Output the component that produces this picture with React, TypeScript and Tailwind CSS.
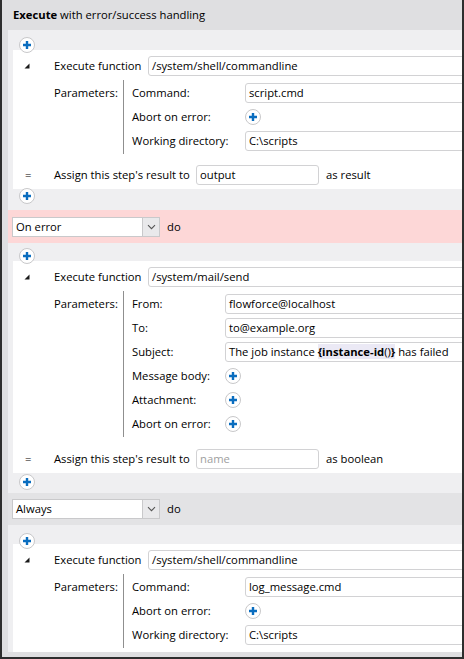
import React from "react";

function PlusButton() {
  return (
    <span className="flex h-[16px] w-[16px] items-center justify-center rounded-full border border-[#c8c8ca] bg-white">
      <svg width="10" height="10" viewBox="0 0 10 10">
        <path d="M5 1v8M1 5h8" stroke="#0a6dbf" strokeWidth="2.4" />
      </svg>
    </span>
  );
}

function Triangle() {
  return (
    <svg width="6" height="6" viewBox="0 0 6 6" className="block">
      <polygon points="5.5,0.5 5.5,5.5 0.5,5.5" fill="#1a1a1a" />
    </svg>
  );
}

function TextBox({ children, wide = true, className = "" }: { children?: React.ReactNode; wide?: boolean; className?: string }) {
  return (
    <div
      className={`flex h-[20px] items-center whitespace-nowrap rounded-[3px] border border-[#d2d2d4] bg-white pl-[3px] ${wide ? "flex-1 -mr-[12px]" : ""} ${className}`}
    >
      {children}
    </div>
  );
}

function Select({ value }: { value: string }) {
  return (
    <div className="flex items-center">
      <div className="flex h-[20px] w-[148px] items-center border border-[#c9c9cb] bg-white">
        <span className="flex-1 pl-[3px]">{value}</span>
        <span className="flex h-full w-[17px] items-center justify-center border-l border-[#c9c9cb] bg-[#e9e9eb]">
          <svg width="9" height="6" viewBox="0 0 9 6">
            <path d="M1 1.2l3.5 3.5L8 1.2" fill="none" stroke="#555" strokeWidth="1.1" />
          </svg>
        </span>
      </div>
      <span className="ml-[7px]">do</span>
    </div>
  );
}

type Param = { label: string; value?: React.ReactNode; plus?: boolean };

function Panel({
  fn,
  params,
  labelWidth,
  assign,
  assignGap = "mt-[11px]",
}: {
  fn: string;
  params: Param[];
  labelWidth: string;
  assign?: { value?: string; placeholder?: string; suffix: string };
  assignGap?: string;
}) {
  return (
    <div className="bg-white pt-[6px] pb-[4px]">
      <div className="flex h-[20px] items-center">
        <div className="w-[41px] pl-[11px]">
          <Triangle />
        </div>
        <div className="w-[94px] whitespace-nowrap">Execute function</div>
        <TextBox>{fn}</TextBox>
      </div>
      <div className="mt-[4px] flex">
        <div className="w-[41px]" />
        <div className="mt-[1px] flex h-[24px] w-[69px] items-center self-start whitespace-nowrap">Parameters:</div>
        <div className="flex-1 border-l border-[#8f8f8f] py-[1px] pl-[8px]">
          {params.map((p) => (
            <div key={p.label} className="flex h-[24px] items-center">
              <div className={`${labelWidth} shrink-0 whitespace-nowrap`}>{p.label}</div>
              {p.plus ? <PlusButton /> : <TextBox>{p.value}</TextBox>}
            </div>
          ))}
        </div>
      </div>
      {assign && (
        <div className={`${assignGap} flex h-[20px] items-center`}>
          <div className="w-[41px] pl-[12px]">=</div>
          <div className="w-[142px] whitespace-nowrap">Assign this step's result to</div>
          <div className="flex h-[20px] w-[123px] items-center rounded-[3px] border border-[#d2d2d4] bg-white pl-[3px]">
            {assign.value ?? <span className="text-[#a0a0a0]">{assign.placeholder}</span>}
          </div>
          <span className="ml-[7px] whitespace-nowrap">{assign.suffix}</span>
        </div>
      )}
    </div>
  );
}

export default function App() {
  return (
    <div
      className="h-[659px] w-[464px] overflow-hidden border-x-2 border-b-2 border-[#2e2e2e] bg-[#dfdfe1] text-[11.25px] leading-none text-black"
      style={{ fontFamily: "'Segoe UI', 'Open Sans', sans-serif" }}
    >
      <div className="flex h-[30px] items-center whitespace-nowrap pl-[11px]">
        <b className="font-bold">Execute</b>
        <span>&nbsp;with error/success handling</span>
      </div>
      <div className="pl-[6px]">
        {/* main step */}
        <div className="bg-[#efeff1] pl-[5px] pt-[7px] pb-[6px]">
          <div className="relative z-10 -mb-[3px] ml-[6px] h-[16px]">
            <PlusButton />
          </div>
          <Panel
            fn="/system/shell/commandline"
            labelWidth="w-[113px]"
            params={[
              { label: "Command:", value: "script.cmd" },
              { label: "Abort on error:", plus: true },
              { label: "Working directory:", value: "C:\\scripts" },
            ]}
            assign={{ value: "output", suffix: "as result" }}
          />
          <div className="relative z-10 -mt-[1px] ml-[6px] h-[16px]">
            <PlusButton />
          </div>
        </div>

        {/* error handler */}
        <div className="flex h-[33px] items-center bg-[#fdd7d7] pl-[4px]">
          <Select value="On error" />
        </div>
        <div className="bg-[#efeff1] pl-[5px] pt-[5px] pb-[3px]">
          <div className="relative z-10 -mb-[3px] ml-[6px] h-[16px]">
            <PlusButton />
          </div>
          <Panel
            fn="/system/mail/send"
            labelWidth="w-[93px]"
            assignGap="mt-[12px]"
            params={[
              { label: "From:", value: "flowforce@localhost" },
              { label: "To:", value: "to@example.org" },
              {
                label: "Subject:",
                value: (
                  <span>
                    The job instance{" "}
                    <span className="bg-[#ebe9f5]">
                      <b className="font-bold">{"{instance-id"}</b>()<b className="font-bold">{"}"}</b>
                    </span>{" "}
                    has failed
                  </span>
                ),
              },
              { label: "Message body:", plus: true },
              { label: "Attachment:", plus: true },
              { label: "Abort on error:", plus: true },
            ]}
            assign={{ placeholder: "name", suffix: "as boolean" }}
          />
          <div className="relative z-10 mt-[1px] ml-[6px] h-[16px]">
            <PlusButton />
          </div>
        </div>

        {/* always handler */}
        <div className="flex h-[32px] items-center bg-[#e3e3e5] pl-[4px]">
          <Select value="Always" />
        </div>
        <div className="bg-[#efeff1] pl-[5px] pt-[8px]">
          <div className="relative z-10 -mb-[5px] ml-[6px] h-[16px]">
            <PlusButton />
          </div>
          <Panel
            fn="/system/shell/commandline"
            labelWidth="w-[113px]"
            params={[
              { label: "Command:", value: "log_message.cmd" },
              { label: "Abort on error:", plus: true },
              { label: "Working directory:", value: "C:\\scripts" },
            ]}
          />
        </div>
      </div>
    </div>
  );
}
